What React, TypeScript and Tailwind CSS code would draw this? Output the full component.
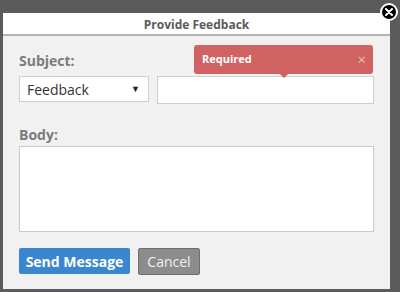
import React from 'react';

const font = { fontFamily: '"Open Sans", "Liberation Sans", sans-serif' };

export default function App() {
  return (
    <div className="relative w-[400px] h-[292px] bg-[#5b5b5b] pl-[3px] pt-[13px] overflow-hidden" style={font}>
      <div className="flex flex-col w-[387px] h-[276px] bg-[#f1f1f1]">
        <div className="h-[23px] flex items-center justify-center pt-[2px] bg-white border-b-2 border-[#b4b4b4] text-[12px] font-bold text-[#5a5a5a]">
          Provide Feedback
        </div>

        <div className="relative flex flex-col px-[16px] pt-[15px]">
          <label className="text-[14px] leading-[20px] font-bold text-[#7b7b7b]">Subject:</label>
          <div className="flex gap-[8px] mt-[5px]">
            <div className="w-[130px] h-[26px] flex items-center justify-between bg-white border border-[#cfcfcf] pl-[7px] pr-[8px] text-[14px] text-[#333]">
              <span>Feedback</span>
              <span className="text-[9px] text-[#222]">▼</span>
            </div>
            <div className="w-[217px] h-[28px] bg-white border border-[#cfcfcf]"></div>
          </div>

          <label className="mt-[21px] text-[14px] leading-[20px] font-bold text-[#7b7b7b]">Body:</label>
          <div className="mt-[1px] w-[355px] h-[86px] bg-white border border-[#c9c9c9]"></div>

          <div className="flex gap-[8px] mt-[16px]">
            <button className="w-[111px] h-[26px] rounded-[2px] bg-[#3a86cf] text-white text-[14px] font-bold">
              Send Message
            </button>
            <button className="w-[62px] h-[27px] rounded-[2px] bg-[#8c8c8c] border border-[#6e6e6e] text-[#f0f0f0] text-[14px]">
              Cancel
            </button>
          </div>

          <div className="absolute left-[191px] top-[9px] w-[179px] h-[29px] rounded-[3px] bg-[#d06262] flex items-center justify-between pl-[8px] pr-[7px] text-white">
            <span className="text-[11px] font-bold">Required</span>
            <span className="text-[15px] text-[#f3bcbc] leading-none">×</span>
            <div className="absolute left-[85px] bottom-[-4px] w-0 h-0 border-l-[5px] border-r-[5px] border-t-[5px] border-l-transparent border-r-transparent border-t-[#d06262]"></div>
          </div>
        </div>
      </div>

      <div className="absolute left-[380px] top-[3px] w-[18px] h-[18px] rounded-full bg-black border-2 border-white flex items-center justify-center">
        <svg width="8" height="8" viewBox="0 0 8 8">
          <path d="M1 1 L7 7 M7 1 L1 7" stroke="white" strokeWidth="2" strokeLinecap="round" />
        </svg>
      </div>
    </div>
  );
}
